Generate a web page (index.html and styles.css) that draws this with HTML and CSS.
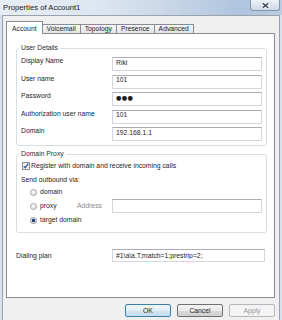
FILE: index.html
```html
<!DOCTYPE html>
<html lang="en">
<head>
  <meta charset="UTF-8" />
  <title>Properties of Account1</title>
  <link rel="stylesheet" href="styles.css">
</head>
<body>
  <div class="window">
    <div class="titlebar">
      <span class="title">Properties of Account1</span>
      <span class="close">
        <svg width="9" height="7" viewBox="0 0 9 7">
          <path d="M1.5 1 L7.5 6 M7.5 1 L1.5 6" stroke="#f4f6f9" stroke-width="3.2" />
          <path d="M1.8 1.2 L7.2 5.8 M7.2 1.2 L1.8 5.8" stroke="#3b4350" stroke-width="1.5" />
        </svg>
      </span>
    </div>

    <div class="client">
      <div class="tabs">
        <div class="tab active">Account</div>
        <div class="tab">Voicemail</div>
        <div class="tab">Topology</div>
        <div class="tab">Presence</div>
        <div class="tab">Advanced</div>
      </div>

      <div class="panel">
        <!-- User details -->
        <div class="group">
          <div class="group-title">User Details</div>
          <div class="fields">
            <div class="field-row">
              <label for="display-name">Display Name</label>
              <input class="text" id="display-name" type="text" value="Riki">
            </div>
            <div class="field-row">
              <label for="user-name">User name</label>
              <input class="text" id="user-name" type="text" value="101">
            </div>
            <div class="field-row">
              <label for="password">Password</label>
              <input class="text pw" id="password" type="text" value="●●●">
            </div>
            <div class="field-row">
              <label for="auth-name">Authorization user name</label>
              <input class="text" id="auth-name" type="text" value="101">
            </div>
            <div class="field-row">
              <label for="domain">Domain</label>
              <input class="text" id="domain" type="text" value="192.168.1.1">
            </div>
          </div>
        </div>

        <!-- Domain proxy -->
        <div class="group proxy-group">
          <div class="group-title">Domain Proxy</div>
          <div class="check-row">
            <span class="checkbox">
              <svg width="8" height="8" viewBox="0 0 8 8">
                <rect x="0.5" y="0.5" width="7" height="7" fill="#f3f3f3" stroke="#8e8f8f" />
                <path d="M1.8 4.1 L3.3 5.7 L6.3 1.7" fill="none" stroke="#3a5796" stroke-width="1.3" />
              </svg>
            </span>
            Register with domain and receive incoming calls
          </div>
          <div class="sub-label">Send outbound via:</div>
          <div class="radio-row">
            <span class="radio"></span>domain
          </div>
          <div class="radio-row proxy-row">
            <span class="radio-opt"><span class="radio"></span>proxy</span>
            <span class="addr-label">Address</span>
            <input class="text" type="text" value="">
          </div>
          <div class="radio-row">
            <span class="radio checked"></span>target domain
          </div>
        </div>

        <div class="plan-row">
          <label for="plan">Dialing plan</label>
          <input class="text plan" id="plan" type="text" value="#1\a\a.T;match=1;prestrip=2;">
        </div>
      </div>

      <div class="buttons">
        <button class="btn default">OK</button>
        <button class="btn">Cancel</button>
        <button class="btn" disabled>Apply</button>
      </div>
    </div>
  </div>
</body>
</html>
```

FILE: styles.css
```css
body {
  margin: 0;
  width: 282px;
  height: 320px;
  overflow: hidden;
  background: #d8e2ed;
  font-family: "Liberation Sans", Arial, sans-serif;
  font-size: 6.8px;
  line-height: 8px;
  color: #1e1e1e;
}

.window {
  display: flex;
  flex-direction: column;
  height: 320px;
}

.titlebar {
  height: 15px;
  display: flex;
  align-items: flex-start;
  background: linear-gradient(to right, #e6edf5 0%, #dde6f0 35%, #c3d3e6 65%, #afc4de 85%, #bccde2 100%);
}

.title {
  font-size: 7.7px;
  line-height: 15px;
  padding-left: 3px;
  color: #1a1a1a;
}

.close {
  margin-left: auto;
  margin-right: 2px;
  width: 30px;
  height: 11px;
  box-sizing: border-box;
  border: 1px solid #8595ab;
  border-top: none;
  border-radius: 0 0 3px 3px;
  background: linear-gradient(#eef2f7, #cdd8e6);
  display: flex;
  align-items: center;
  justify-content: center;
}

.client {
  flex: 1;
  margin: 0 2px;
  border: 1px solid #9aa3ad;
  border-bottom: none;
  background: #f0f0f0;
  padding: 5px 4px 0 3px;
}

/* tabs */
.tabs {
  display: flex;
  align-items: flex-end;
}

.tab {
  border: 1px solid #898c95;
  border-bottom: none;
  margin-left: -1px;
  padding: 0 4px;
  background: linear-gradient(#f6f6f6, #e4e4e4);
  white-space: nowrap;
}

.tab.active {
  position: relative;
  z-index: 1;
  margin-left: 0;
  padding: 3px 5px 1px;
  margin-bottom: -1px;
  background: #fff;
}

.panel {
  box-sizing: border-box;
  height: 265px;
  border: 1px solid #898c95;
  background: #fff;
  padding: 14px 7px 0 9px;
}

/* group boxes */
.group {
  border: 1px solid #d5dfe5;
  border-radius: 3px;
  padding: 0 4px 4px;
}

.group-title {
  display: table;
  margin: -5px 0 0 -2px;
  padding: 0 2px;
  background: #fff;
  color: #2a2a2a;
}

.fields {
  display: flex;
  flex-direction: column;
  gap: 3.5px;
  margin-top: 5px;
}

.field-row {
  display: flex;
  height: 14px;
}

.field-row label {
  width: 91px;
  flex: none;
}

.text {
  box-sizing: border-box;
  flex: 1;
  min-width: 0;
  height: 14px;
  margin: 0;
  padding: 0 3px 4px;
  border: 1px solid #d3d6dc;
  border-top-color: #abadb3;
  background: #fff;
  font: inherit;
  color: #1e1e1e;
  outline: none;
}

.text.pw {
  font-family: "DejaVu Sans", sans-serif;
  font-size: 6.2px;
  letter-spacing: 0.3px;
}

.proxy-group {
  margin-top: 8px;
  padding-bottom: 8px;
}

.check-row {
  display: flex;
  align-items: center;
  height: 9px;
  margin-top: 3px;
}

.checkbox {
  display: flex;
  margin: 0 1px;
}

.sub-label {
  margin-top: 6px;
}

.radio-row {
  display: flex;
  align-items: center;
  height: 8px;
  padding-left: 9px;
  margin-top: 3px;
}

.sub-label + .radio-row {
  margin-top: 4px;
}

.radio {
  box-sizing: border-box;
  width: 7px;
  height: 7px;
  margin-right: 3px;
  border: 1px solid #a4a4a4;
  border-radius: 50%;
  background: radial-gradient(circle at 40% 35%, #fdfdfd, #d6d6d6);
}

.radio.checked {
  border-color: #8a8f98;
  background: radial-gradient(circle, #1f3f78 0 1.4px, #eaeaea 1.9px);
}

.proxy-row {
  height: 14px;
}

.radio-opt {
  display: flex;
  align-items: center;
  width: 47px;
}

.addr-label {
  width: 35px;
  color: #8a8a8a;
}

.plan-row {
  display: flex;
  align-items: center;
  margin: 16px 2px 0 0;
}

.plan-row label {
  width: 96px;
  flex: none;
}

.text.plan {
  height: 13px;
  padding: 0 3px;
}

/* dialog buttons */
.buttons {
  display: flex;
  justify-content: flex-end;
  gap: 6px;
  margin-top: 6px;
}

.btn {
  box-sizing: border-box;
  width: 46px;
  height: 13px;
  padding: 0;
  border: 1px solid #707070;
  border-radius: 2px;
  background: linear-gradient(#f3f3f3, #ebebeb 50%, #dddddd 50%, #cfcfcf);
  font: inherit;
  color: #1e1e1e;
}

.btn.default {
  border-color: #3c7fb1;
  background: linear-gradient(#eef6fb, #e2eef7 50%, #d3e4f1 50%, #c6dcee);
}

.btn:disabled {
  border-color: #b5b8bb;
  background: #f4f4f4;
  color: #9a9a9a;
}
```
